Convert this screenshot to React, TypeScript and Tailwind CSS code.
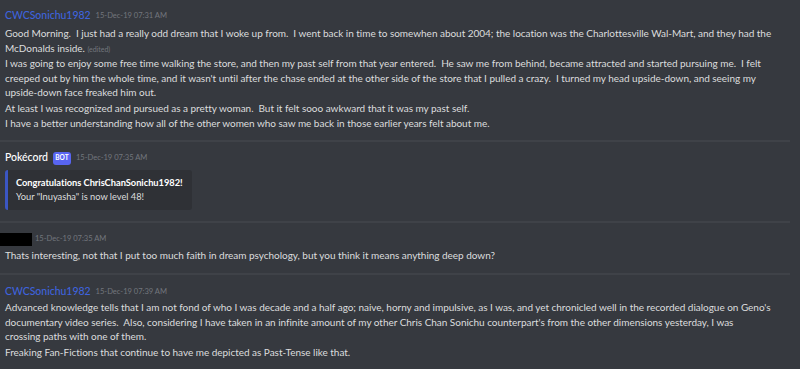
import React from "react";

const Line = ({ children }: { children: React.ReactNode }) => (
  <div className="whitespace-nowrap leading-[14.5px] h-[14.5px]">{children}</div>
);

const Sep = () => <div className="h-[2px] w-[790px] bg-[#3f4248]" />;

const Stamp = ({ t, ml = "ml-[5px]" }: { t: string; ml?: string }) => (
  <span className={`text-[7.6px] text-[#72767d] ${ml}`}>{t}</span>
);

export default function App() {
  return (
    <div
      className="w-[800px] h-[369px] overflow-hidden bg-[#36393f] text-[#dcddde] text-[10px] tracking-[-0.03px]"
      style={{ fontFamily: 'Lato, "Noto Sans", sans-serif' }}
    >
      {/* Group 1 */}
      <div className="pt-[8px] pl-[5px] pb-[9.5px]">
        <div className="h-[16px] flex items-center">
          <span className="text-[10.5px] font-medium text-[#3e63dd]">CWCSonichu1982</span>
          <Stamp t="15-Dec-19 07:31 AM" />
        </div>
        <div className="mt-[2px] flex flex-col gap-[1px]">
          <div>
            <Line>
              Good Morning.&nbsp; I just had a really odd dream that I woke up from.&nbsp; I went back in time to somewhen about 2004; the location was the Charlottesville Wal-Mart, and they had the
            </Line>
            <Line>
              McDonalds inside. <span className="text-[7px] text-[#72767d]">(edited)</span>
            </Line>
          </div>
          <div>
            <Line>
              I was going to enjoy some free time walking the store, and then my past self from that year entered.&nbsp; He saw me from behind, became attracted and started pursuing me.&nbsp; I felt
            </Line>
            <Line>
              creeped out by him the whole time, and it wasn't until after the chase ended at the other side of the store that I pulled a crazy.&nbsp; I turned my head upside-down, and seeing my
            </Line>
            <Line>upside-down face freaked him out.</Line>
          </div>
          <div>
            <Line>
              At least I was recognized and pursued as a pretty woman.&nbsp; But it felt sooo awkward that it was my past self.
            </Line>
          </div>
          <div>
            <Line>
              I have a better understanding how all of the other women who saw me back in those earlier years felt about me.
            </Line>
          </div>
        </div>
      </div>
      <Sep />

      {/* Group 2 */}
      <div className="pt-[8px] pl-[5px] pb-[11px]">
        <div className="h-[16px] flex items-center">
          <span className="text-[10.5px] font-medium text-white">Pokécord</span>
          <span className="ml-[5px] h-[13px] w-[18px] justify-center rounded-[3px] bg-[#5865f2] text-white text-[6.5px] font-bold flex items-center">
            BOT
          </span>
          <Stamp t="15-Dec-19 07:35 AM" />
        </div>
        <div className="mt-[4px] w-[187px] h-[40px] bg-[#2f3136] border-l-[3px] border-[#3b56c4] rounded-[3px] pl-[8px] pt-[6px]">
          <div className="whitespace-nowrap leading-[14px] font-bold text-[9.3px] text-white">
            Congratulations ChrisChanSonichu1982!
          </div>
          <div className="whitespace-nowrap leading-[14px] text-[9.3px] text-[#dcddde]">
            Your "Inuyasha" is now level 48!
          </div>
        </div>
      </div>
      <Sep />

      {/* Group 3 */}
      <div className="pt-[9px] pb-[11px]">
        <div className="h-[14px] flex items-center">
          <span className="w-[32px] h-[13px] bg-black" />
          <Stamp t="15-Dec-19 07:35 AM" ml="ml-[3px]" />
        </div>
        <div className="mt-[2px] pl-[5px]">
          <div className="whitespace-nowrap leading-[14px]">
            Thats interesting, not that I put too much faith in dream psychology, but you think it means anything deep down?
          </div>
        </div>
      </div>
      <Sep />

      {/* Group 4 */}
      <div className="pt-[9px] pl-[5px]">
        <div className="h-[16px] flex items-center">
          <span className="text-[10.5px] font-medium text-[#3e63dd]">CWCSonichu1982</span>
          <Stamp t="15-Dec-19 07:39 AM" />
        </div>
        <div className="flex flex-col gap-[1px]">
          <div>
            <Line>
              Advanced knowledge tells that I am not fond of who I was decade and a half ago; naive, horny and impulsive, as I was, and yet chronicled well in the recorded dialogue on Geno's
            </Line>
            <Line>
              documentary video series.&nbsp; Also, considering I have taken in an infinite amount of my other Chris Chan Sonichu counterpart's from the other dimensions yesterday, I was
            </Line>
            <Line>crossing paths with one of them.</Line>
          </div>
          <div>
            <Line>Freaking Fan-Fictions that continue to have me depicted as Past-Tense like that.</Line>
          </div>
        </div>
      </div>
    </div>
  );
}
